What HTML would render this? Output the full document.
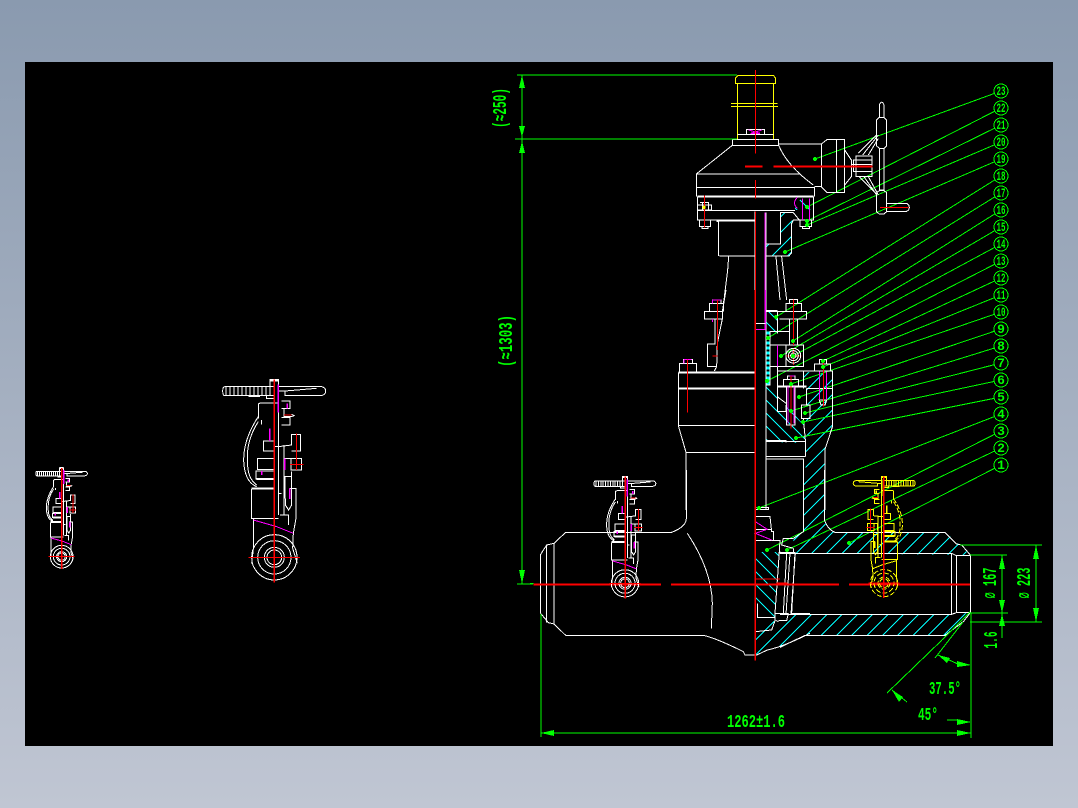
<!DOCTYPE html>
<html><head><meta charset="utf-8"><title>Gate valve CAD drawing</title>
<style>
html,body{margin:0;padding:0;width:1078px;height:808px;overflow:hidden;background:linear-gradient(#8a9aaf,#c0c6d3)}
#v{position:absolute;left:25px;top:62px;width:1028px;height:684px;background:#000}
svg{position:absolute;left:0;top:0;shape-rendering:crispEdges}
svg *{vector-effect:non-scaling-stroke}
.w{fill:none;stroke:#fff;stroke-width:1}
.v{fill:none;stroke:var(--w,#fff);stroke-width:1}
.vd{fill:none;stroke:var(--w,#fff);stroke-width:1;stroke-dasharray:var(--d,none)}
.vm{fill:none;stroke:var(--m,#f0f);stroke-width:1.5}
.r{fill:none;stroke:#f00;stroke-width:1}
.m{fill:none;stroke:#f0f;stroke-width:1}
.g{fill:none;stroke:#0f0;stroke-width:1}
.y{fill:none;stroke:#ff0;stroke-width:1}
.c{fill:none;stroke:#0ff;stroke-width:1}
.t{fill:#0f0;font-family:"Liberation Mono",monospace;font-weight:bold}
</style></head><body>
<div id="v"></div>
<svg width="1078" height="808" viewBox="0 0 1078 808">
<defs>
<clipPath id="cb">
<polygon points="781,213 793,213 792,223 792,253 789,256 766,256 766,244 781,244"/>
<polygon points="804,372 833,373 833,425 825,449 825,510 804,510 806,457 806,407 807,388 803,388"/>
<polygon points="755,632 773,621 787,622 810,614 810,633 783,646 767,650 755,655"/>
<polygon points="803,470 824,470 824,520 833,532 945,532 960,545 970,555 795,553 793,538 803,532"/>
<polygon points="793,614 952,614 970,613 945,635 805,636 780,647 780,620"/>
</clipPath>
<clipPath id="cf">
<polygon points="795,198 813,198 813,210 795,210"/>
<polygon points="766,312 777,312 777,333 766,333"/>
<polygon points="766,387 777,387 777,412 786,412 786,405 802,423 803,418 806,443 766,442"/>
<polygon points="755,552 779,552 775,617 757,617 757,603 755,603"/>
</clipPath>
<g id="valve">
<path class="v" d="M45,35 H192 M45,62 H192 M38,48 Q38,35 45,35 M38,48 Q38,62 45,62 M48,35V62M60,35V62M72,35V62M84,35V62M96,35V62M108,35V62M120,35V62M132,35V62M144,35V62M156,35V62M168,35V62M180,35V62"/>
<path class="v" d="M180,35 V14 H205 V35 M205,35 H335 Q347,38 347,48 Q347,60 332,62 H225 V48 L320,40 M225,48 H205 M115,64 H150 M170,62 V70 H190"/>
<path class="v" d="M145,130 V90 Q145,84 155,84 H205 M155,135 V148"/>
<path class="vd" d="M145,125 C125,155 100,200 101,258 C103,300 115,325 140,335 M145,140 C125,170 110,210 112,258 C113,295 120,315 140,330"/>
<path class="v" d="M160,198 H193 V228 H160 Z M142,250 H193 V283 H142 Z M138,288 H193 V312 H138 Z M125,342 H193 M125,342 V430 H205 M130,430 V522 L125,565 M250,475 L248,520 L262,565"/>
<path class="v" d="M205,60 V420 M193,215 H205 M205,215 L245,210 V178 H272 V228 H245 M222,228 V420 M243,250 H275 V285 H243 Z M222,210 V250 M222,250 H243 M225,305 H245 V390 L236,405 L226,390 Z M238,340 H258 V430 L250,475 M210,420 H235 V450 M205,355 H215 M245,290 V340"/>
<path class="v" d="M215,78 H240 V100 H215 M215,100 H222 V125 H245 L252,122 L245,118 M215,128 H240 V150 H215"/>
<circle class="vd" cx="193" cy="547" r="68"/><circle class="vd" cx="193" cy="547" r="50"/><circle class="vd" cx="193" cy="547" r="30"/><circle class="vd" cx="193" cy="547" r="22"/>
<path class="vm" d="M205,28 V112 M180,160 V198 M232,85 V100 M240,340 V372 M155,288 V300 M225,250 V285"/>
<path class="vm" style="stroke-width:1" d="M130,435 L200,455 L250,475"/>
<path class="v" style="stroke-width:2" d="M140,312 H190 M125,340 H190 M180,16 H205"/>
<path class="r" style="stroke-width:1.5" d="M193,14 V622"/>
<path class="r" d="M115,547 H270 M260,175 V285 M240,268 H280 M222,120 H245"/>
</g>
</defs>

<!-- section hatching -->
<g clip-path="url(#cb)"><path class="c" d="M267,700l500,-500m-484.7,500l500,-500m-484.7,500l500,-500m-484.7,500l500,-500m-484.7,500l500,-500m-484.7,500l500,-500m-484.7,500l500,-500m-484.7,500l500,-500m-484.7,500l500,-500m-484.7,500l500,-500m-484.7,500l500,-500m-484.7,500l500,-500m-484.7,500l500,-500m-484.7,500l500,-500m-484.7,500l500,-500m-484.7,500l500,-500m-484.7,500l500,-500m-484.7,500l500,-500m-484.7,500l500,-500m-484.7,500l500,-500m-484.7,500l500,-500m-484.7,500l500,-500m-484.7,500l500,-500m-484.7,500l500,-500m-484.7,500l500,-500m-484.7,500l500,-500m-484.7,500l500,-500m-484.7,500l500,-500m-484.7,500l500,-500m-484.7,500l500,-500m-484.7,500l500,-500m-484.7,500l500,-500m-484.7,500l500,-500m-484.7,500l500,-500m-484.7,500l500,-500m-484.7,500l500,-500m-484.7,500l500,-500m-484.7,500l500,-500m-484.7,500l500,-500m-484.7,500l500,-500m-484.7,500l500,-500"/></g>
<g clip-path="url(#cf)"><path class="c" d="M800,200l500,500m-513,-500l500,500m-513,-500l500,500m-513,-500l500,500m-513,-500l500,500m-513,-500l500,500m-513,-500l500,500m-513,-500l500,500m-513,-500l500,500m-513,-500l500,500m-513,-500l500,500m-513,-500l500,500m-513,-500l500,500m-513,-500l500,500m-513,-500l500,500m-513,-500l500,500m-513,-500l500,500m-513,-500l500,500m-513,-500l500,500m-513,-500l500,500m-513,-500l500,500m-513,-500l500,500m-513,-500l500,500m-513,-500l500,500m-513,-500l500,500m-513,-500l500,500m-513,-500l500,500m-513,-500l500,500m-513,-500l500,500m-513,-500l500,500m-513,-500l500,500m-513,-500l500,500m-513,-500l500,500m-513,-500l500,500m-513,-500l500,500"/></g>

<!-- leaders -->
<path class="g" d="M1001,91L815,159M1001,108L807,207M1001,125L807,221M1001,142L807,225M1001,159L785,252M1001,176L776,317M1001,193L768,338M1001,210L793,341M1001,227L781,356M1001,244L793,356M1001,261L767,381M1001,278L823,361M1001,295L823,367M1001,312L791,384M1001,329L799,397M1001,346L791,411M1001,363L805,413M1001,380L803,422M1001,397L796,438M1001,414L759,508M1001,431L767,550M1001,448L787,550M1001,465L849,543"/>

<!-- top bonnet & gearbox -->
<g transform="translate(680,70) scale(.33333)">
<path class="y" d="M166,40 V25 L175,16 H280 L287,25 V40 Z M172,40 V208 M281,40 V208 M153,100 H292 M153,109 H294"/>
<path class="w" d="M199,178 H254 V193 H199 Z M172,193 H281 M157,208 H296 V226 H157 Z M157,226 L49,312 V380 M296,226 Q322,288 400,345 M49,312 H358 M49,352 H404 V380 M296,222 H424 L442,208 H494 V368 H442 L424,350 V222 M470,208 V368 M404,350 H424 M494,240 L514,270 V320 L494,345"/>
<path class="w" d="M528,258 H576 V320 H528 Z M520,270 H576 V305 H520 Z M514,283 H576 M590,195 L535,250 M595,195 L548,255 M595,205 L565,255 M538,320 L590,372 M552,320 L590,375 M565,320 L595,375"/>
<path class="w" d="M598,142 V105 Q605,88 612,105 V142 M590,150 L598,142 H612 L620,150 V228 L612,235 H598 L590,228 Z M598,235 V360 M612,235 V360 M598,360 H612 M590,368 L598,362 H612 L620,368 V425 L612,432 H598 L590,425 Z M620,400 H680 Q688,405 688,412 Q688,420 680,424 H620"/>
<path class="w" d="M52,380 V450 H225 M52,421 H345 M60,398 H86 V420 M52,405 H95 V420 H52 M68,398 V420 M58,450 V470 H92 V450 M66,470 H84 V475 H66 Z M110,455 H115 V555 Q115,558 125,558 H225 M146,560 L143,600 L132,690 L130,700"/>
<path class="w" d="M258,428 V780 M225,425 V780 M225,760 H258 V778 H225 M258,522 H302 V428 H340 M340,428 L358,450 H340 L335,460 V548 L327,558 H258 M288,560 L300,690 M305,560 L320,690 M400,380 V450 H360 M360,450 H395 V470 H360 Z M368,470 H388 V475 H368 Z"/>
<path class="w" style="stroke-width:2" d="M52,380 H400 M110,451 H225"/>
<path class="m" d="M206,180 L240,190 L212,190 L246,180 M367,385 V450 M388,385 V450 M352,382 Q335,400 352,415 M255,428 V780"/>
<path class="r" d="M226,0 V250 M226,330 V385 M226,425 V780 M73,376 V472 M600,412 H685"/>
<path class="r" style="stroke-width:2" d="M195,289 H248 M280,289 H578"/>
<circle cx="72" cy="412" r="5" fill="#ff0"/>
</g>

<!-- middle section -->
<g transform="translate(660,290) scale(.33333)">
<path d="M324,125 V285" stroke="#0ff" stroke-width="3" stroke-dasharray="3 2" fill="none"/>
<path class="w" d="M133,65 H187 V87 H133 Z M148,65 V40 H190 V65 M158,40 V30 H183 V40 M198,0 L187,65 M187,87 L172,160 M165,87 V162 H142 V230 H170 L172,160 M170,230 L163,243"/>
<path class="w" d="M58,245 V220 H110 V245 M70,220 V208 H97 V220 M55,248 V407 L78,487 V660 M55,407 H286 M78,487 H286 M55,298 V407"/>
<path class="w" d="M318,65 V660 M318,62 H352 M320,65 H440 V87 H358 M352,65 V130 M378,65 V40 H425 V65 M388,40 V28 H413 V40 M388,87 V125 M413,87 V165 M330,125 H388 V165 H330 Z M330,125 V285 H318 M330,165 V230 H430 V165 H378 V230 M352,243 H518 V408 L495,478 V660 M352,230 V365 H378 V345 M352,320 L378,340 M430,243 V295 M370,290 V268 H415 V290 M382,268 V258 H405 V268 M440,295 V345 M440,295 H518 M352,290 H440 M463,245 V222 H512 V245 M478,222 V208 H500 V222 M478,330 H500 L495,345 H483 Z M380,290 V405 H405 V290 M425,345 H450 V385 H425 Z M430,385 L437,460 V500 M318,455 H437 M318,500 H437 M318,507 H430 V660 M318,452 H378 V458"/>
<path class="w" style="stroke-width:2" d="M55,248 H286 M55,295 H286 M352,290 H440"/>
<path class="m" d="M158,30 H183 M158,30 V40 M158,87 V96 M72,208 H95 M72,208 V220 M352,165 V230 M388,258 H403 M478,245 V330 M500,245 V330 M384,290 V400 M402,290 V400 M316,0 V118 M286,118 H316"/>
<path class="w" d="M286,100 H316"/>
<path class="r" d="M172,30 V180 M82,208 V368 M157,198 H172 M400,28 V165 M490,208 V350 M393,258 V415 M400,175 V225 M378,198 H425"/>
<path class="r" style="stroke-width:1.5" d="M286,0 V660"/>
<circle class="w" cx="400" cy="197" r="22"/><circle class="w" cx="400" cy="197" r="15"/><circle class="w" cx="400" cy="197" r="8"/>
</g>

<!-- lower left body -->
<g transform="translate(530,470) scale(.33333)">
<path class="w" d="M469,0 V145 Q469,170 425,187 H107 L72,220 L50,225 L32,253 V430 L55,458 L72,462 L107,496 H520 Q560,505 640,545 L645,555 H680 L712,540 Q760,530 840,490"/>
<path class="w" d="M72,220 V462 M50,225 V458 M472,190 Q545,300 547,400 L544,476"/>
<path class="w" d="M676,118 H716 V112 H680 M676,140 H720 L725,185 H730 V212 H676 M676,178 H725 M676,212 H750 L745,290 L735,430 V450 L745,455 M676,212 V485 Q676,485 725,480 L735,452 M750,248 H795 L785,430 H840 M770,250 L760,430 M682,400 V443 H735 M735,430 H775 L770,452 H745"/>
<path class="m" d="M676,155 L712,178 L676,190 L725,210"/>
<path class="r" style="stroke-width:1.5" d="M676,0 V572"/>
<path class="r" d="M676,327 H750"/>
<path class="r" style="stroke-width:2" d="M10,343 H393 M423,343 H840 M740,340 H775"/>
<path d="M0,340 H10" stroke="#0f0" fill="none"/>
</g>

<!-- lower right body -->
<g transform="translate(780,470) scale(.33333)">
<path class="w" d="M133,0 V150 Q145,180 165,187 H495 L530,222 L545,225 L571,255 V428 L550,455 L495,496 H75 L0,532 M70,0 V185 L40,205 H10 L5,225 L40,235"/>
<path class="w" d="M0,250 H515 V433 H0 M515,250 L529,257 V428 L515,433 M529,257 H571 M529,428 H571 M30,250 L18,433 M46,250 L33,433 M0,250 V245 M40,235 V250"/>
<path class="r" style="stroke-width:2" d="M0,343 H177 M207,343 H570"/>
</g>

<!-- small valves -->
<use href="#valve" transform="translate(210,375) scale(.33333)"/>
<use href="#valve" transform="translate(29.5,465.5) scale(.16667)"/>
<use href="#valve" transform="translate(586.4,473.9) scale(.2)"/>
<use href="#valve" transform="translate(922.6,473.7) scale(-.2,.2)" style="--w:#ff0;--m:#ff0;--d:5 2"/>

<!-- dimensions -->
<path class="g" d="M522,75 V584 M517,75 H737 M515,139 H737 M517,584 H533 M541,614 V737 M541,733 H971 M971,613 V738 M960,545 H1042 M970,622 H1042 M970,555 H1007 M970,613 H1008 M1002,555 V638 M1036,545 V622 M887,693 L942,640 M942,640 L970,612 M935,658 L963,622"/>
<g fill="#0f0">
<polygon points="522,75 519,88 525,88"/><polygon points="522,137 519,126 525,126"/><polygon points="522,141 519,153 525,153"/><polygon points="522,584 519,570 525,570"/>
<polygon points="541,733 554,730 554,736"/><polygon points="971,733 957,730 957,736"/><polygon points="971,722 957,719 957,725"/><polygon points="971,665 957,661 957,667"/>
<polygon points="1002,555 999,569 1005,569"/><polygon points="1002,613 999,600 1005,600"/><polygon points="1002,614 999,626 1005,626"/><polygon points="1036,545 1033,559 1039,559"/><polygon points="1036,622 1033,608 1039,608"/>
<polygon points="938,655 950,658 947,663"/><polygon points="892,690 903,697 899,702"/>
</g>
<path class="g" d="M947,720 H958 M938,655 L958,664 M892,690 L907,702"/>

<text class="t" font-size="19" transform="translate(506,108) rotate(-90)" text-anchor="middle" textLength="40" lengthAdjust="spacingAndGlyphs">(≈250)</text>
<text class="t" font-size="19" transform="translate(512,341) rotate(-90)" text-anchor="middle" textLength="52" lengthAdjust="spacingAndGlyphs">(≈1303)</text>
<text class="t" font-size="19" transform="translate(996,583) rotate(-90)" text-anchor="middle" textLength="31" lengthAdjust="spacingAndGlyphs">⌀ 167</text>
<text class="t" font-size="19" transform="translate(1030,583) rotate(-90)" text-anchor="middle" textLength="31" lengthAdjust="spacingAndGlyphs">⌀ 223</text>
<text class="t" font-size="19" transform="translate(997,640) rotate(-90)" text-anchor="middle" textLength="17" lengthAdjust="spacingAndGlyphs">1.6</text>
<text class="t" font-size="18" x="727" y="727" textLength="58" lengthAdjust="spacingAndGlyphs">1262±1.6</text>
<text class="t" font-size="18" x="929" y="694" textLength="32" lengthAdjust="spacingAndGlyphs">37.5°</text>
<text class="t" font-size="18" x="918" y="720" textLength="20" lengthAdjust="spacingAndGlyphs">45°</text>

<!-- balloons -->
<g fill="#000" stroke="#0f0">
<circle cx="1001" cy="91" r="7"/><circle cx="1001" cy="108" r="7"/><circle cx="1001" cy="125" r="7"/><circle cx="1001" cy="142" r="7"/><circle cx="1001" cy="159" r="7"/><circle cx="1001" cy="176" r="7"/><circle cx="1001" cy="193" r="7"/><circle cx="1001" cy="210" r="7"/><circle cx="1001" cy="227" r="7"/><circle cx="1001" cy="244" r="7"/><circle cx="1001" cy="261" r="7"/><circle cx="1001" cy="278" r="7"/><circle cx="1001" cy="295" r="7"/><circle cx="1001" cy="312" r="7"/><circle cx="1001" cy="329" r="7"/><circle cx="1001" cy="346" r="7"/><circle cx="1001" cy="363" r="7"/><circle cx="1001" cy="380" r="7"/><circle cx="1001" cy="397" r="7"/><circle cx="1001" cy="414" r="7"/><circle cx="1001" cy="431" r="7"/><circle cx="1001" cy="448" r="7"/><circle cx="1001" cy="465" r="7"/>
</g>
<g class="t" font-size="13" text-anchor="middle">
<text x="1001" y="95" textLength="9" lengthAdjust="spacingAndGlyphs">23</text><text x="1001" y="112" textLength="9" lengthAdjust="spacingAndGlyphs">22</text><text x="1001" y="129" textLength="9" lengthAdjust="spacingAndGlyphs">21</text><text x="1001" y="146" textLength="9" lengthAdjust="spacingAndGlyphs">20</text><text x="1001" y="163" textLength="9" lengthAdjust="spacingAndGlyphs">19</text><text x="1001" y="180" textLength="9" lengthAdjust="spacingAndGlyphs">18</text><text x="1001" y="197" textLength="9" lengthAdjust="spacingAndGlyphs">17</text><text x="1001" y="214" textLength="9" lengthAdjust="spacingAndGlyphs">16</text><text x="1001" y="231" textLength="9" lengthAdjust="spacingAndGlyphs">15</text><text x="1001" y="248" textLength="9" lengthAdjust="spacingAndGlyphs">14</text><text x="1001" y="265" textLength="9" lengthAdjust="spacingAndGlyphs">13</text><text x="1001" y="282" textLength="9" lengthAdjust="spacingAndGlyphs">12</text><text x="1001" y="299" textLength="9" lengthAdjust="spacingAndGlyphs">11</text><text x="1001" y="316" textLength="9" lengthAdjust="spacingAndGlyphs">10</text><text x="1001" y="333">9</text><text x="1001" y="350">8</text><text x="1001" y="367">7</text><text x="1001" y="384">6</text><text x="1001" y="401">5</text><text x="1001" y="418">4</text><text x="1001" y="435">3</text><text x="1001" y="452">2</text><text x="1001" y="469">1</text>
</g>
<!-- leader dots -->
<g fill="#0f0">
<circle cx="815" cy="159" r="2"/><circle cx="807" cy="207" r="2"/><circle cx="807" cy="221" r="2"/><circle cx="807" cy="225" r="2"/><circle cx="785" cy="252" r="2"/><circle cx="776" cy="317" r="2"/><circle cx="768" cy="338" r="2"/><circle cx="793" cy="341" r="2"/><circle cx="781" cy="356" r="2"/><circle cx="793" cy="356" r="2"/><circle cx="767" cy="381" r="2"/><circle cx="823" cy="361" r="2"/><circle cx="823" cy="367" r="2"/><circle cx="791" cy="384" r="2"/><circle cx="799" cy="397" r="2"/><circle cx="791" cy="411" r="2"/><circle cx="805" cy="413" r="2"/><circle cx="803" cy="422" r="2"/><circle cx="796" cy="438" r="2"/><circle cx="759" cy="508" r="2"/><circle cx="767" cy="550" r="2"/><circle cx="787" cy="550" r="2"/><circle cx="849" cy="543" r="2"/>
</g>
</svg>
</body></html>
